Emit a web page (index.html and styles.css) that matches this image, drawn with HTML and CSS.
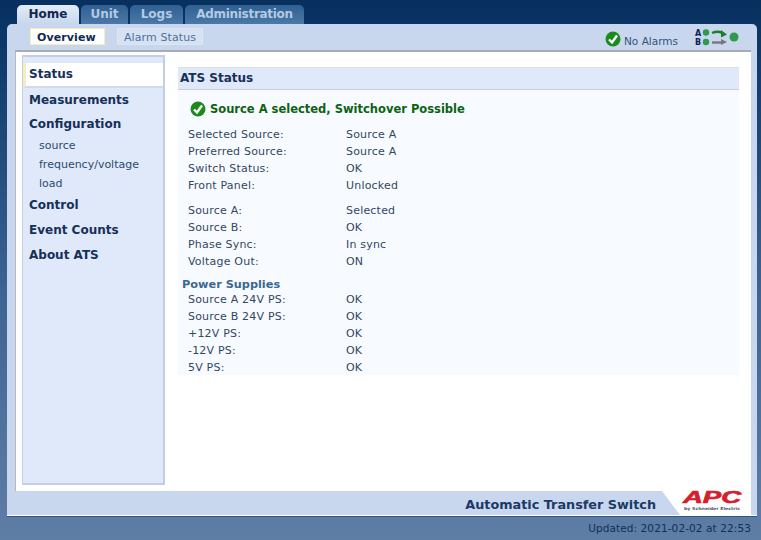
FILE: index.html
```html
<!DOCTYPE HTML>
<html>
	<head>
	<meta charset="utf-8">
	<title>Automatic Transfer Switch</title>
	<link rel="stylesheet" href="styles.css">
	</head>
	<body>
		<ul class="tabs">
			<li class="tab tab-on tab-home"><a href="#">Home</a></li>
			<li class="tab tab-unit"><a href="#">Unit</a></li>
			<li class="tab tab-logs"><a href="#">Logs</a></li>
			<li class="tab tab-admin"><a href="#">Administration</a></li>
		</ul>
		<div class="frame">
			<div class="subnav">
				<a class="sub sub-on" href="#">Overview</a>
				<a class="sub" href="#">Alarm Status</a>
				<div class="alarms">
					<svg class="check" width="16" height="16" viewBox="0 0 16 16"><circle cx="8" cy="8" r="7.5" fill="#1c8a1c"/><path d="M4 8.5l3 3 5-7" fill="none" stroke="#fff" stroke-width="2.4"/></svg>
					<span class="alarm-text">No Alarms</span>
					<svg class="ats-icon" width="46" height="20" viewBox="0 0 46 20">
						<text x="1" y="8" class="ats-letter">A</text>
						<text x="1" y="17" class="ats-letter">B</text>
						<circle cx="12" cy="4.500" r="3.200" fill="#2f9a4c"/>
						<circle cx="12" cy="14" r="3.200" fill="#2f9a4c"/>
						<path d="M18 5q6-2.500 10 0" fill="none" stroke="#1c7f2c" stroke-width="2.400"/>
						<path d="M27 2l6 4.500-6 3z" fill="#1c7f2c"/>
						<path d="M18 14.500h10" stroke="#777" stroke-width="2.400"/>
						<path d="M27 11l6 3-6 3z" fill="#777"/>
						<circle cx="40" cy="9" r="4.500" fill="#2f9a4c"/>
					</svg>
				</div>
			</div>
			<div class="main">
				<div class="content">
					<ul class="side">
						<li class="side-on"><a href="#">Status</a></li>
						<li class="side-meas"><a href="#">Measurements</a></li>
						<li class="side-conf"><a href="#">Configuration</a></li>
						<li class="side-sub"><a href="#">source</a></li>
						<li class="side-sub"><a href="#">frequency/voltage</a></li>
						<li class="side-sub"><a href="#">load</a></li>
						<li class="side-ctrl"><a href="#">Control</a></li>
						<li class="side-ev"><a href="#">Event Counts</a></li>
						<li class="side-ev"><a href="#">About ATS</a></li>
					</ul>
					<div class="panel">
						<h2 class="panel-head">ATS Status</h2>
						<div class="panel-body">
							<div class="state">
								<svg width="16" height="16" viewBox="0 0 16 16"><circle cx="8" cy="8" r="7.5" fill="#1c8a1c"/><path d="M4 8.5l3 3 5-7" fill="none" stroke="#fff" stroke-width="2.4"/></svg>
								<span>Source A selected, Switchover Possible</span>
							</div>
							<dl class="rows">
								<dt>Selected Source:</dt><dd>Source A</dd>
								<dt>Preferred Source:</dt><dd>Source A</dd>
								<dt>Switch Status:</dt><dd>OK</dd>
								<dt>Front Panel:</dt><dd>Unlocked</dd>
							</dl>
							<dl class="rows rows-gap">
								<dt>Source A:</dt><dd>Selected</dd>
								<dt>Source B:</dt><dd>OK</dd>
								<dt>Phase Sync:</dt><dd>In sync</dd>
								<dt>Voltage Out:</dt><dd>ON</dd>
							</dl>
							<h3 class="group">Power Supplies</h3>
							<dl class="rows">
								<dt>Source A 24V PS:</dt><dd>OK</dd>
								<dt>Source B 24V PS:</dt><dd>OK</dd>
								<dt>+12V PS:</dt><dd>OK</dd>
								<dt>-12V PS:</dt><dd>OK</dd>
								<dt>5V PS:</dt><dd>OK</dd>
							</dl>
						</div>
					</div>
				</div>
				<div class="foot">
					<div class="foot-title">Automatic Transfer Switch</div>
					<svg class="logo" width="62" height="24" viewBox="0 0 62 24">
						<text x="31" y="14" class="logo-apc" textLength="58" lengthAdjust="spacingAndGlyphs">APC</text>
						<text x="31" y="21" class="logo-by" textLength="56" lengthAdjust="spacingAndGlyphs">by Schneider Electric</text>
					</svg>
				</div>
			</div>
		</div>
		<div class="updated">Updated: 2021-02-02 at 22:53</div>
	</body>
</html>
```

FILE: styles.css
```css
html, body {
	margin: 0;
	height: 540px;
	overflow: hidden;
}
body {
	background: linear-gradient(#07305f 0, #0f3a6b 60px, #3f6594 300px, #5f7ea6 540px);
	font-family: "DejaVu Sans", Verdana, sans-serif;
	font-size: 11px;
	color: #33475f;
}
a { color: inherit; text-decoration: none; }
ul, dl, dd, h2, h3 { margin: 0; padding: 0; }
ul { list-style: none; }

.tabs {
	display: flex;
	gap: 2px;
	height: 19px;
	padding: 5px 0 0 17px;
}
.tab {
	height: 19px;
	box-sizing: border-box;
	padding-top: 2px;
	text-align: center;
	font-size: 12px;
	font-weight: bold;
	border-radius: 5px 5px 0 0;
	background: linear-gradient(#2f6092, #4b79a8);
	color: #b4c9e2;
}
.tab-on { background: linear-gradient(#e4ecf8, #c8d7ee); color: #10294f; }
.tab-home { width: 62px; }
.tab-unit { width: 47px; }
.tab-logs { width: 53px; }
.tab-admin { width: 119px; letter-spacing: -.3px; }

.frame {
	margin: 0 4px 0 7px;
	height: 492px;
	box-sizing: border-box;
	background: #c8d7ee;
	border-radius: 5px 5px 0 0;
	border-bottom: 1px solid #fff;
	box-shadow: 0 1px 0 #32577f;
	padding-left: 8px;
	padding-right: 6px;
	display: flex;
	flex-direction: column;
}
.subnav {
	height: 26px;
	flex: none;
	display: flex;
	align-items: flex-start;
	gap: 12px;
	padding: 4px 0 0 15px;
	box-sizing: border-box;
}
.sub {
	height: 17px;
	box-sizing: border-box;
	padding: 2px 6px 0;
	background: #d6e2f3;
	border: 1px solid #dce6f4;
	color: #4f7099;
	font-size: 11px;
	letter-spacing: .1px;
}
.sub-on {
	background: #fff;
	border-color: #f3eebc;
	color: #10294f;
	font-weight: bold;
	width: 75px;
}
.alarms {
	margin-left: auto;
	display: flex;
	align-items: flex-start;
	margin-right: 11px;
	margin-top: -2px;
}
.check { margin-top: 5px; }
.alarm-text { color: #33537a; margin: 9px 16px 0 3px; font-size: 10.500px; }
.ats-icon { margin-top: 2px; }
.ats-letter { font-size: 8px; font-weight: bold; fill: #10205f; }

.main {
	flex: 1;
	display: flex;
	flex-direction: column;
	background: #fff;
	border-top: 2px solid #a9adb3;
}
.content {
	flex: 1;
	display: flex;
	align-items: flex-start;
	padding: 3px 12px 0 6px;
	border-left: 1px solid #b3bac4;
}
.side {
	width: 140px;
	height: 426px;
	flex: none;
	background: #e0e9f9;
	border: 1px solid #c3cfe4;
	border-width: 2px 2px 2px 1px;
	font-size: 12px;
	font-weight: bold;
	color: #16305a;
}
.side li { padding-left: 6px; }
.side-on {
	margin-top: 6px;
	height: 25px;
	line-height: 23px;
	background: #fff;
	border-left: 3px solid #f3eebc;
	border-bottom: 2px solid #d3dbe8;
	box-sizing: border-box;
	padding-left: 3px !important;
	margin-bottom: 3px;
}
.side-meas, .side-conf, .side-ctrl, .side-ev { line-height: 18px; }
.side-conf { margin-top: 6px; margin-bottom: 3px; }
.side li.side-sub {
	font-weight: normal;
	font-size: 11px;
	line-height: 19px;
	padding-left: 16px;
	color: #2d4a70;
}
.side-ctrl { margin-top: 3px; margin-bottom: 7px; }
.side-ev { margin-bottom: 7px; }

.panel {
	flex: 1;
	margin: 12px 0 0 13px;
}
.panel-head {
	height: 23px;
	box-sizing: border-box;
	padding: 3px 0 0 2px;
	background: #e0e9f9;
	border-top: 1px solid #d8e0ec;
	border-bottom: 1px solid #c3cfe4;
	font-size: 12px;
	font-weight: bold;
	color: #16305a;
}
.panel-body {
	background: #f7fbff;
	height: 285px;
	padding-left: 10px;
	box-sizing: border-box;
}
.state {
	display: flex;
	align-items: center;
	gap: 4px;
	padding: 2px 0 0 2px;
	height: 36px;
	box-sizing: border-box;
	font-size: 11.500px;
	font-weight: bold;
	color: #0d6212;
}
.rows {
	display: grid;
	grid-template-columns: 158px 1fr;
	grid-auto-rows: 17px;
	line-height: 17px;
	letter-spacing: .2px;
}
.rows dt { color: #33475f; }
.rows-gap { margin-top: 8px; }
.group {
	font-size: 11.300px;
	font-weight: bold;
	color: #3d688f;
	margin: 8px 0 0 -6px;
	line-height: 13px;
}
.foot {
	height: 24px;
	flex: none;
	display: flex;
	align-items: stretch;
	background: #fff;
}
.foot-title {
	flex: 1;
	background: #c8d7ee;
	clip-path: polygon(0 0, 647px 0, 665px 100%, 0 100%);
	text-align: right;
	padding-right: 25px;
	font-size: 12.800px;
	font-weight: bold;
	line-height: 27px;
	color: #1b3a66;
	white-space: nowrap;
}
.logo {
	flex: none;
	margin: -2px 8px 0 0;
	width: 62px;
}
.logo-apc {
	text-anchor: middle;
	font-family: "Liberation Sans", sans-serif;
	font-size: 16px;
	font-weight: bold;
	font-style: italic;
	fill: #d5202a;
	stroke: #d5202a;
	stroke-width: .6px;
}
.logo-by {
	text-anchor: middle;
	font-size: 4px;
	font-weight: bold;
	fill: #47566a;
}
.updated {
	text-align: right;
	padding: 6px 10px 0 0;
	font-size: 10.500px;
	letter-spacing: .1px;
	color: #102f58;
}
```
